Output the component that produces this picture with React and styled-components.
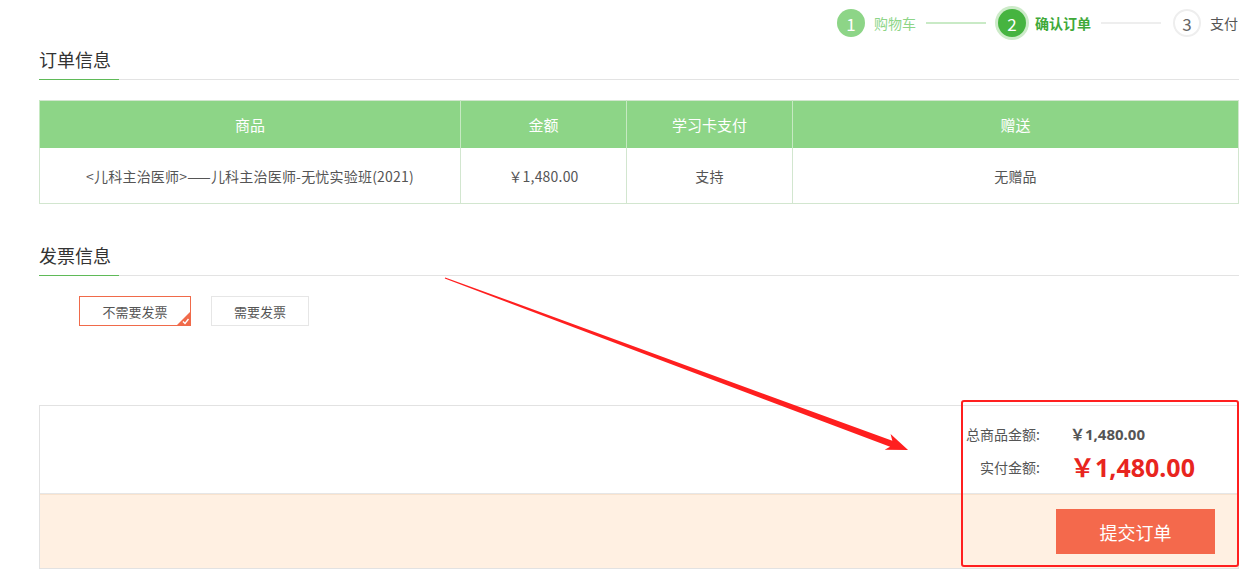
import React from 'react';
import styled, { createGlobalStyle } from 'styled-components';

const Global = createGlobalStyle`
  html, body { margin: 0; padding: 0; background: #fff; }
  body {
    font-family: "Noto Sans CJK SC", "Noto Sans", "Liberation Sans", sans-serif;
    color: #333;
  }
`;

const steps = [
  { no: 1, label: '购物车', state: 'done' },
  { no: 2, label: '确认订单', state: 'active' },
  { no: 3, label: '支付', state: 'todo' },
];

const Page = styled.div`
  position: relative;
  width: 1200px;
  margin-left: 39px;
  min-height: 581px;
`;

const Steps = styled.div`
  height: 46px;
  display: flex;
  justify-content: flex-end;
  align-items: center;
  padding-right: 1px;
`;

const Step = styled.div`
  display: flex;
  align-items: center;
  gap: 9px;
`;

const Circle = styled.span`
  width: 28px;
  height: 28px;
  box-sizing: border-box;
  border-radius: 50%;
  display: flex;
  align-items: center;
  justify-content: center;
  font-size: 17px;
  background: ${p => (p.$state === 'done' ? '#8dd587' : p.$state === 'active' ? '#46b440' : '#fff')};
  color: ${p => (p.$state === 'todo' ? '#666' : '#fff')};
  border: ${p => (p.$state === 'todo' ? '2px solid #eee' : 'none')};
  box-shadow: ${p => (p.$state === 'active' ? '0 0 0 3px #cdebc9' : 'none')};
`;

const StepLabel = styled.span`
  font-size: 14px;
  font-weight: ${p => (p.$state === 'active' ? 700 : 400)};
  color: ${p => (p.$state === 'done' ? '#8dd587' : p.$state === 'active' ? '#3fa93a' : '#555')};
`;

const StepLine = styled.span`
  width: 60px;
  height: 2px;
  margin: 0 12px 0 10px;
  background: ${p => (p.$done ? '#c9eac6' : '#eee')};
`;

const SectionTitle = styled.div`
  margin-top: ${p => p.$top || 0}px;
  border-bottom: 1px solid #e3e3e3;
  span {
    display: inline-block;
    width: 80px;
    font-size: 18px;
    line-height: 26px;
    padding-bottom: 7px;
    margin-bottom: -1px;
    border-bottom: 1px solid #5fba58;
    color: #333;
  }
`;

const Table = styled.table`
  width: 100%;
  margin-top: 20px;
  border-collapse: collapse;
  table-layout: fixed;
  border: 1px solid #d2e6cf;
  th, td {
    padding: 0;
    line-height: 20px;
    text-align: center;
  }
  th {
    height: 47px;
    background: #8dd587;
    color: #fff;
    font-weight: 400;
    font-size: 15px;
    border-left: 1px solid #c6e9c2;
  }
  td {
    height: 55px;
    font-size: 14px;
    letter-spacing: 0.2px;
    color: #555;
    border-left: 1px solid #d2e6cf;
  }
`;

const Choices = styled.div`
  display: flex;
  gap: 20px;
  margin: 20px 0 0 40px;
`;

const Choice = styled.div`
  position: relative;
  height: 30px;
  box-sizing: border-box;
  width: ${p => p.$w}px;
  display: flex;
  align-items: center;
  justify-content: center;
  font-size: 13px;
  color: #555;
  border: 1px solid ${p => (p.$on ? '#f06a4a' : '#e6e6e6')};
`;

const Tick = styled.svg`
  position: absolute;
  right: -1px;
  bottom: -1px;
`;

const Summary = styled.div`
  margin-top: 79px;
  border: 1px solid #e2e2e2;
`;

const Totals = styled.div`
  display: grid;
  grid-template-columns: 80px 145px;
  column-gap: 30px;
  row-gap: 4px;
  justify-content: end;
  align-items: center;
  padding: 16px 23px 9px 0;
  border-bottom: 1px solid #e6e6e6;
`;

const Label = styled.span`
  text-align: right;
  font-size: 14px;
  line-height: 24px;
  color: #555;
`;

const Amount = styled.span`
  font-weight: 700;
  font-size: ${p => (p.$big ? 25 : 15)}px;
  line-height: ${p => (p.$big ? 34 : 24)}px;
  color: ${p => (p.$big ? '#e8251e' : '#555')};
  font-family: "Noto Sans", "Noto Sans CJK SC", sans-serif;
`;

const Footer = styled.div`
  background: #fff0e2;
  border-top: 1px solid #f8e3cf;
  display: flex;
  justify-content: flex-end;
  padding: 14px 23px 14px 0;
`;

const Submit = styled.button`
  width: 159px;
  height: 45px;
  border: none;
  background: #f4694c;
  color: #fff;
  font-size: 18px;
  font-family: inherit;
  cursor: pointer;
`;

const Highlight = styled.div`
  position: absolute;
  left: 922px;
  top: 400px;
  width: 278px;
  height: 167px;
  box-sizing: border-box;
  border: 2.5px solid #ff1f1f;
  border-radius: 3px;
  pointer-events: none;
`;

const ArrowLayer = styled.svg`
  position: absolute;
  left: -39px;
  top: 0;
  pointer-events: none;
`;

export default function App() {
  return (
    <>
      <Global />
      <Page>
        <Steps>
          {steps.map((s, i) => (
            <React.Fragment key={s.no}>
              <Step>
                <Circle $state={s.state}>{s.no}</Circle>
                <StepLabel $state={s.state}>{s.label}</StepLabel>
              </Step>
              {i < steps.length - 1 && <StepLine $done={s.state === 'done'} />}
            </React.Fragment>
          ))}
        </Steps>

        <SectionTitle><span>订单信息</span></SectionTitle>
        <Table>
          <colgroup>
            <col style={{ width: 421 }} />
            <col style={{ width: 166 }} />
            <col style={{ width: 166 }} />
            <col />
          </colgroup>
          <thead>
            <tr>
              <th>商品</th>
              <th>金额</th>
              <th>学习卡支付</th>
              <th>赠送</th>
            </tr>
          </thead>
          <tbody>
            <tr>
              <td>&lt;儿科主治医师&gt;——儿科主治医师-无忧实验班(2021)</td>
              <td>￥1,480.00</td>
              <td>支持</td>
              <td>无赠品</td>
            </tr>
          </tbody>
        </Table>

        <SectionTitle $top={38}><span>发票信息</span></SectionTitle>
        <Choices>
          <Choice $w={112} $on>
            不需要发票
            <Tick width="15" height="15" viewBox="0 0 15 15">
              <path d="M15 0 L15 15 L0 15 Z" fill="#f06a4a" />
              <path d="M7 10.5 L9 12.5 L12.5 8" stroke="#fff" strokeWidth="1.4" fill="none" />
            </Tick>
          </Choice>
          <Choice $w={98}>需要发票</Choice>
        </Choices>

        <Summary>
          <Totals>
            <Label>总商品金额:</Label>
            <Amount>￥1,480.00</Amount>
            <Label>实付金额:</Label>
            <Amount $big>￥1,480.00</Amount>
          </Totals>
          <Footer>
            <Submit>提交订单</Submit>
          </Footer>
        </Summary>

        <Highlight />
        <ArrowLayer width="1248" height="581">
          <g transform="translate(445 278) rotate(20.38)">
            <polygon points="0,-0.6 476,-3.2 472,-9 494,0 472,8 476,3.2 0,0.6" fill="#ff1f1f" />
          </g>
        </ArrowLayer>
      </Page>
    </>
  );
}
